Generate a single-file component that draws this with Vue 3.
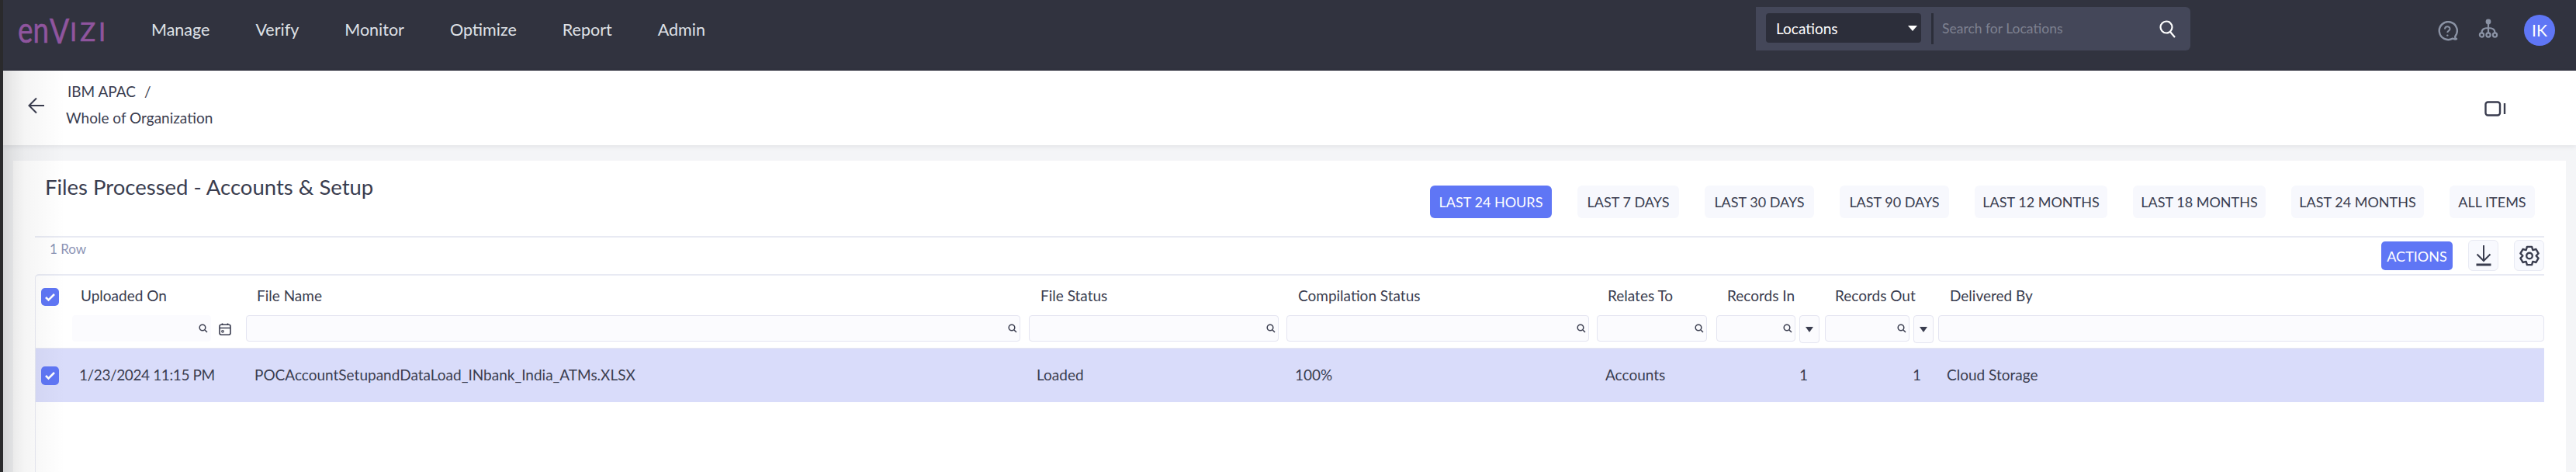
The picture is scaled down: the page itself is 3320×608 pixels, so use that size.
<template>
  <div class="page">
    <header class="topbar">
      <div class="logo"><span class="logo-en">en</span><span class="logo-v">V</span><span class="logo-izi">IZI</span></div>
      <nav class="nav">
        <a v-for="item in navItems" :key="item">{{ item }}</a>
      </nav>
      <div class="search-group">
        <div class="select">
          <span>Locations</span>
          <i class="caret"></i>
        </div>
        <div class="search-input">
          <span>Search for Locations</span>
          <svg width="26" height="24" viewBox="0 0 26 24" fill="none" stroke="#fff" stroke-width="2.2">
            <circle cx="11" cy="10" r="7.5" />
            <path d="M16 16l6 7" />
          </svg>
        </div>
      </div>
      <div class="top-icons">
        <svg class="help" width="27" height="27" viewBox="0 0 27 27" fill="none" stroke="#8b93a5" stroke-width="2.4">
          <path d="M20 22.600A11.500 11.500 0 1 1 23.500 19.500c-.6 1.500-.2 3 1.500 3.600-1.800.7-3.600.4-5-.5z" stroke-linejoin="round" />
          <path d="M10 10.500c0-4.200 6.500-4.200 6.500-.3 0 2.500-3.200 2.300-3.200 4.800" stroke-width="2" />
          <circle cx="13.300" cy="18.600" r="1.200" fill="#8b93a5" stroke="none" />
        </svg>
        <svg class="org" width="26" height="26" viewBox="0 0 26 26" fill="none" stroke="#8b93a5" stroke-width="2.2">
          <circle cx="13" cy="4" r="3.400" fill="#8b93a5" stroke="none" />
          <path d="M13 7v11M13 12c-6 0-8.500 2-8.500 6M13 12c6 0 8.500 2 8.500 6" />
          <circle cx="4.500" cy="21" r="2.600" />
          <circle cx="13" cy="21" r="2.600" />
          <circle cx="21.500" cy="21" r="2.600" />
        </svg>
        <div class="avatar">IK</div>
      </div>
    </header>

    <section class="subheader">
      <svg class="back" width="22" height="22" viewBox="0 0 22 22" fill="none" stroke="#3a3d4f" stroke-width="2">
        <path d="M21 11H2M11 1.500L1.500 11l9.500 9.500" />
      </svg>
      <div class="crumbs">
        <div class="crumb-top">IBM APAC <span class="slash">/</span></div>
        <div class="crumb-bottom">Whole of Organization</div>
      </div>
      <svg class="video" width="28" height="20" viewBox="0 0 28 20" fill="none" stroke="#3a3d4f" stroke-width="2.400">
        <rect x="1.500" y="1.500" width="18.500" height="17" rx="3" />
        <path d="M26 3v14" />
      </svg>
    </section>

    <main class="content">
      <div class="card">
        <div class="title-row">
          <h1>Files Processed - Accounts &amp; Setup</h1>
          <div class="ranges">
            <button
              v-for="(r, i) in ranges"
              :key="r.label"
              class="range"
              :class="{ active: i === 0 }"
              :style="{ width: r.width + 'px' }"
            >{{ r.label }}</button>
          </div>
        </div>
        <div class="toolbar">
          <span class="row-count">1 Row</span>
          <div class="tools">
            <button class="actions">ACTIONS</button>
            <button class="tool">
              <svg width="22" height="28" viewBox="0 0 22 28" fill="none" stroke="#3a3d4f" stroke-width="2">
                <path d="M11 1v19M2.500 12.500l8.500 8.500 8.500-8.500" />
                <path d="M1.500 26h19" stroke-width="3" />
              </svg>
            </button>
            <button class="tool">
              <svg width="26" height="27" viewBox="0 0 26 27" fill="none" stroke="#3a3d4f" stroke-width="2.400" stroke-linejoin="round">
                <path :d="gearPath" />
                <circle cx="13" cy="13.500" r="3.800" />
              </svg>
            </button>
          </div>
        </div>

        <div class="table">
          <div class="grid head">
            <div class="check-cell"><span class="check"><svg width="15" height="15" viewBox="0 0 15 15" fill="none" stroke="#fff" stroke-width="2.600"><path d="M2 8l3.500 3.500L13 4" /></svg></span></div>
            <div v-for="col in columns" :key="col.name" class="head-label" :style="{ paddingLeft: col.head + 'px' }">{{ col.name }}</div>
          </div>
          <div class="grid filters">
            <div></div>
            <div v-for="col in columns" :key="col.name" class="filter-cell" :style="{ paddingRight: col.gap + 'px' }">
              <div class="filter" :class="{ plain: col.plain }">
                <svg v-if="!col.noSearch" class="mag" width="12" height="12" viewBox="0 0 12 12" fill="none" stroke="#3a3d4f" stroke-width="1.500">
                  <circle cx="5" cy="5" r="3.800" />
                  <path d="M8 8l3 3" />
                </svg>
              </div>
              <svg v-if="col.calendar" class="calendar" width="16" height="16" viewBox="0 0 16 16" fill="none" stroke="#3a3d4f" stroke-width="1.600">
                <rect x="1" y="2.200" width="14" height="13" rx="2.200" />
                <path d="M1 6.500h14M4.500 .5v2.500M11.500 .5v2.500" />
                <circle cx="5" cy="10.800" r="1.300" stroke-width="1.200" />
              </svg>
              <button v-if="col.menu" class="filter-menu"><i></i></button>
            </div>
          </div>
          <div class="grid row">
            <div class="check-cell"><span class="check tall"><svg width="15" height="15" viewBox="0 0 15 15" fill="none" stroke="#fff" stroke-width="2.600"><path d="M2 8l3.500 3.500L13 4" /></svg></span></div>
            <div
              v-for="col in columns"
              :key="col.name"
              class="cell"
              :class="{ num: col.num, tight: col.calendar }"
              :style="{ paddingLeft: col.cell + 'px' }"
            >{{ col.value }}</div>
          </div>
        </div>
      </div>
    </main>
    <div class="edge"></div>
    <div class="edge-shade"></div>
  </div>
</template>

<script setup>
const navItems = ['Manage', 'Verify', 'Monitor', 'Optimize', 'Report', 'Admin']

const ranges = [
  { label: 'LAST 24 HOURS', width: 157 },
  { label: 'LAST 7 DAYS', width: 131 },
  { label: 'LAST 30 DAYS', width: 141 },
  { label: 'LAST 90 DAYS', width: 141 },
  { label: 'LAST 12 MONTHS', width: 171 },
  { label: 'LAST 18 MONTHS', width: 171 },
  { label: 'LAST 24 MONTHS', width: 171 },
  { label: 'ALL ITEMS', width: 110 }
]

const columns = [
  { name: 'Uploaded On', value: '1/23/2024 11:15 PM', head: 11, cell: 9, gap: 45, plain: true, calendar: true },
  { name: 'File Name', value: 'POCAccountSetupandDataLoad_INbank_India_ATMs.XLSX', head: 14, cell: 11, gap: 11 },
  { name: 'File Status', value: 'Loaded', head: 15, cell: 10, gap: 10 },
  { name: 'Compilation Status', value: '100%', head: 15, cell: 11, gap: 10 },
  { name: 'Relates To', value: 'Accounts', head: 14, cell: 11, gap: 12 },
  { name: 'Records In', value: '1', head: 14, cell: 0, gap: 12, num: true, menu: true },
  { name: 'Records Out', value: '1', head: 13, cell: 0, gap: 11, num: true, menu: true },
  { name: 'Delivered By', value: 'Cloud Storage', head: 15, cell: 11, gap: 0, noSearch: true }
]

// six-lobed gear outline, built from polar points
const gearPath = (() => {
  const pts = []
  for (let i = 0; i < 6; i++) {
    const a = (i * Math.PI) / 3 - Math.PI / 2
    for (const [off, r] of [[-0.52, 8.6], [-0.26, 12], [0.26, 12], [0.52, 8.6]]) {
      pts.push([13 + r * Math.cos(a + off), 13.5 + r * Math.sin(a + off)])
    }
  }
  return 'M' + pts.map((p) => p[0].toFixed(2) + ' ' + p[1].toFixed(2)).join('L') + 'z'
})()
</script>

<style>
html, body { margin: 0; background: #f4f5f7; }
</style>

<style scoped>
.page {
  position: relative;
  width: 3320px;
  height: 608px;
  overflow: hidden;
  font-family: "Lato", "Noto Sans", sans-serif;
  color: #3a3d4f;
  background: #f4f5f7;
  box-sizing: border-box;
  padding-left: 4px;
}
.edge {
  position: absolute;
  left: 0;
  top: 0;
  bottom: 0;
  width: 4px;
  background: #2a2a2c;
}
.edge-shade {
  position: absolute;
  left: 4px;
  top: 91px;
  bottom: 0;
  width: 80px;
  pointer-events: none;
  background: linear-gradient(90deg, rgba(0, 0, 0, 0.13), rgba(0, 0, 0, 0.08) 16%, rgba(0, 0, 0, 0.04) 35%, rgba(0, 0, 0, 0));
}
.topbar {
  height: 91px;
  margin-left: -4px;
  background: #31333f;
  display: flex;
  align-items: flex-start;
  box-sizing: border-box;
}
.logo {
  width: 108px;
  height: 40px;
  margin: 18px 0 0 23px;
  color: #8f559e;
  white-space: nowrap;
  display: flex;
  align-items: flex-start;
  -webkit-text-stroke: 0.6px #8f559e;
}
.logo-en {
  width: 41px;
  font-size: 46px;
  line-height: 40px;
  transform: scaleX(0.8);
  transform-origin: left top;
}
.logo-v {
  width: 26px;
  margin-top: 1px;
  font-size: 44px;
  line-height: 40px;
  transform: scaleX(0.85);
  transform-origin: left top;
}
.logo-izi {
  margin-top: 5px;
  font-size: 33px;
  line-height: 34px;
  letter-spacing: 4px;
}
.nav {
  display: flex;
  gap: 59px;
  margin: 22px 0 0 64px;
  font-size: 21.500px;
  line-height: 32px;
  color: #dfe1e6;
}
.search-group {
  margin: 9px 318px 0 auto;
  width: 560px;
  height: 56px;
  background: #444759;
  border-radius: 0 6px 6px 0;
  display: flex;
  align-items: flex-start;
  padding: 8px 0 0 13px;
  box-sizing: border-box;
  flex-shrink: 0;
}
.select {
  width: 200px;
  height: 38px;
  background: #2c2e3a;
  border-radius: 4px;
  display: flex;
  justify-content: space-between;
  align-items: center;
  padding: 0 5px 0 13px;
  box-sizing: border-box;
  color: #fff;
  font-size: 19px;
}
.caret {
  width: 0;
  height: 0;
  border-left: 6px solid transparent;
  border-right: 6px solid transparent;
  border-top: 7px solid #fff;
}
.search-input {
  margin-left: 13px;
  width: 334px;
  height: 40px;
  border-left: 3px solid #2c2e3a;
  display: flex;
  justify-content: space-between;
  padding-left: 11px;
  padding-top: 9px;
  box-sizing: border-box;
  color: #7e8190;
  font-size: 17.500px;
}
.search-input svg { margin-top: -1px; margin-right: 16px; }
.top-icons {
  display: flex;
  align-items: flex-start;
  margin: 19px 27px 0 0;
}
.help { margin-top: 8px; }
.org { margin: 5px 0 0 26px; }
.avatar {
  width: 40px;
  height: 40px;
  margin-left: 33px;
  border-radius: 50%;
  background: #5f76f5;
  color: #fff;
  font-size: 21px;
  line-height: 40px;
  text-align: center;
}
.subheader {
  position: relative;
  height: 96px;
  background: #fff;
  display: flex;
  align-items: flex-start;
  box-shadow: 0 2px 6px rgba(30, 30, 50, 0.08);
}
.back { margin: 34px 0 0 32px; }
.crumbs { margin-left: 27px; padding-top: 15px; font-size: 19px; }
.crumb-top { line-height: 24px; padding-left: 2px; }
.slash { margin-left: 6px; }
.crumb-bottom { line-height: 24px; margin-top: 10px; }
.video { margin: 39px 90px 0 auto; }
.content { padding: 20px 13px 0 13px; }
.card {
  width: 3290px;
  height: 401px;
  background: #fff;
  padding: 0 28px;
  box-sizing: border-box;
  position: relative;
}
.title-row {
  height: 97px;
  display: flex;
  justify-content: space-between;
  align-items: flex-start;
  border-bottom: 2px solid #e8eaf3;
  padding-right: 12px;
}
h1 {
  margin: 17px 0 0 13px;
  font-size: 27.500px;
  line-height: 34px;
  font-weight: 400;
}
.ranges {
  display: flex;
  gap: 33px;
  margin-top: 32px;
}
.range {
  height: 42px;
  padding: 0;
  border: none;
  border-radius: 6px;
  background: #f7f8fd;
  color: #3a3d4f;
  font-family: inherit;
  font-size: 18px;
}
.range.active { background: #5f76f5; color: #fff; }
.toolbar {
  height: 47px;
  display: flex;
  justify-content: space-between;
  align-items: flex-start;
}
.row-count {
  margin: 5px 0 0 19px;
  line-height: 20px;
  font-size: 17px;
  color: #8b93b5;
}
.tools { display: flex; align-items: flex-start; padding-top: 3px; }
.actions {
  width: 92px;
  height: 37px;
  margin-top: 2px;
  border: none;
  border-radius: 5px;
  background: #5f76f5;
  color: #fff;
  font-family: inherit;
  font-size: 18px;
  padding: 0;
}
.tool {
  width: 39px;
  height: 40px;
  padding: 0;
  margin-left: 20px;
  border: 1px solid #e8eaf3;
  border-radius: 6px;
  background: #f8f9fe;
  display: flex;
  align-items: center;
  justify-content: center;
}
.table {
  border-top: 2px solid #e8eaf3;
  border-left: 1px solid #e8eaf3;
  border-radius: 5px 0 0 0;
  height: 300px;
}
.grid {
  display: grid;
  grid-template-columns: 47px 224px 1009px 332px 400px 154px 140px 146px 781px;
}
.head { height: 51px; align-items: center; }
.head-label { font-size: 19px; line-height: 24px; }
.check-cell { padding-left: 7px; }
.head .check-cell { padding-top: 4px; }
.check {
  display: flex;
  width: 23px;
  height: 23px;
  border-radius: 5px;
  background: #5f76f5;
  align-items: center;
  justify-content: center;
}
.check.tall { height: 24px; }
.filters {
  height: 43px;
  border-bottom: 1px solid #e5e6f1;
  box-sizing: border-box;
}
.filter-cell {
  display: flex;
  align-items: flex-start;
  gap: 5px;
}
.filter {
  flex: 1;
  height: 34px;
  border: 1px solid #e4e5f1;
  border-radius: 4px;
  background: #fbfbfe;
  display: flex;
  align-items: center;
  justify-content: flex-end;
  padding-right: 3px;
  box-sizing: border-box;
}
.filter.plain { border-color: transparent; }
.filter-cell:has(.calendar) { gap: 0; }
.calendar { margin: 10px -26px 0 10px; flex-shrink: 0; }
.filter-menu {
  width: 26px;
  height: 36px;
  padding: 0;
  border: 1px solid #e4e5f1;
  border-radius: 4px;
  background: #fbfbfe;
  display: flex;
  align-items: center;
  justify-content: center;
  flex-shrink: 0;
  margin-right: -5px;
}
.filter-menu i {
  width: 0;
  height: 0;
  border-left: 5px solid transparent;
  border-right: 5px solid transparent;
  border-top: 7px solid #3a3d4f;
}
.row {
  height: 69px;
  background: #d9dcfa;
  align-items: center;
}
.cell { font-size: 19px; line-height: 24px; white-space: nowrap; padding-bottom: 1px; }
.cell.tight { letter-spacing: -0.4px; }
.cell.num { text-align: right; padding-right: 22px; }
</style>
